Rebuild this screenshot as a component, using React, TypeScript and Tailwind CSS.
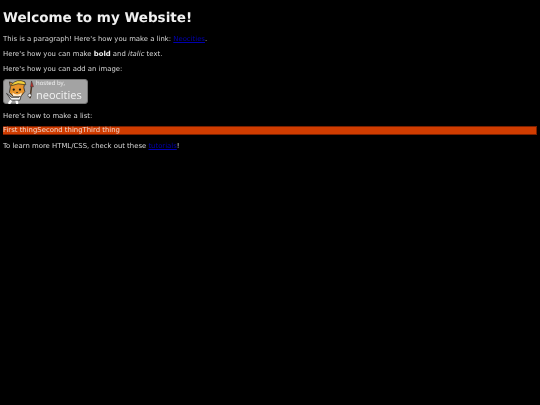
function NeocitiesBadge() {
  return (
    <div className="flex h-[25px] w-[85px] items-center rounded-[3px] border border-[#777] bg-[#a3a3a3]">
      <svg viewBox="0 0 32 26" className="h-[25px] w-[32px] shrink-0">
        <path d="M7 22l-2 3M12 21l1 4" stroke="#fff" strokeWidth="2.5" strokeLinecap="round" />
        <path d="M2 15l5 4 8 0 3-5-2 8H7z" fill="#f4f4f4" stroke="#222" strokeWidth="0.8" />
        <path d="M6 8l-1-5 5 2 7-1 4-1-1 6 1 4-4 5-8 0-4-4z" fill="#e8952c" stroke="#222" strokeWidth="0.8" />
        <path d="M7 6q6-7 14-3l1 3-8-1-7 2z" fill="#f2cf3b" stroke="#222" strokeWidth="0.7" />
        <path d="M8 14q5 4 10 0l-1 4-8 0z" fill="#fbe9cf" />
        <circle cx="9.5" cy="11" r="1.2" fill="#111" />
        <circle cx="16" cy="11" r="1.2" fill="#111" />
        <path d="M12 14h2" stroke="#222" strokeWidth="0.8" />
        <path d="M26.5 20l1.5-12" stroke="#4a3320" strokeWidth="1.6" />
        <path d="M27 8l1-6 2 6z" fill="#c9332b" stroke="#222" strokeWidth="0.5" />
        <circle cx="26" cy="17" r="1.8" fill="#f4f4f4" stroke="#222" strokeWidth="0.6" />
      </svg>
      <div className="flex flex-col font-['Open_Sans',sans-serif] leading-normal text-[#f2f2f2]">
        <span className="text-[6px]">hosted by,</span>
        <span className="text-[11px]">neocities</span>
      </div>
    </div>
  );
}

export default function App() {
  return (
    <div className="min-h-[405px] bg-black p-[3px] font-['DejaVu_Sans',sans-serif] text-[6.88px] leading-[9px] text-[#d8d8d8] [text-rendering:geometricPrecision]">
      <div className="will-change-transform">
        <h1 className="mt-[6px] text-[13.5px] leading-[18px] font-bold text-[#f0f0f0]">Welcome to my Website!</h1>
        <p className="mt-[8px]">
          This is a paragraph! Here's how you make a link: <a className="text-[#0000b0] underline">Neocities</a>.
        </p>
        <p className="mt-[6px]">
          Here's how you can make <strong className="text-[#f0f0f0]">bold</strong> and <em className="italic">italic</em> text.
        </p>
        <p className="mt-[6px]">Here's how you can add an image:</p>
        <div className="mt-[5px]">
          <NeocitiesBadge />
        </div>
        <p className="mt-[8px]">Here's how to make a list:</p>
        <ul className="mt-[5px] flex h-[9px] items-center border-y border-r border-[#7a2000] bg-[#d03c00] text-[#f0d8cc]">
          <li>First thing</li>
          <li>Second thing</li>
          <li>Third thing</li>
        </ul>
        <p className="mt-[7px]">
          To learn more HTML/CSS, check out these <a className="text-[#0000b0] underline">tutorials</a>!
        </p>
      </div>
    </div>
  );
}
